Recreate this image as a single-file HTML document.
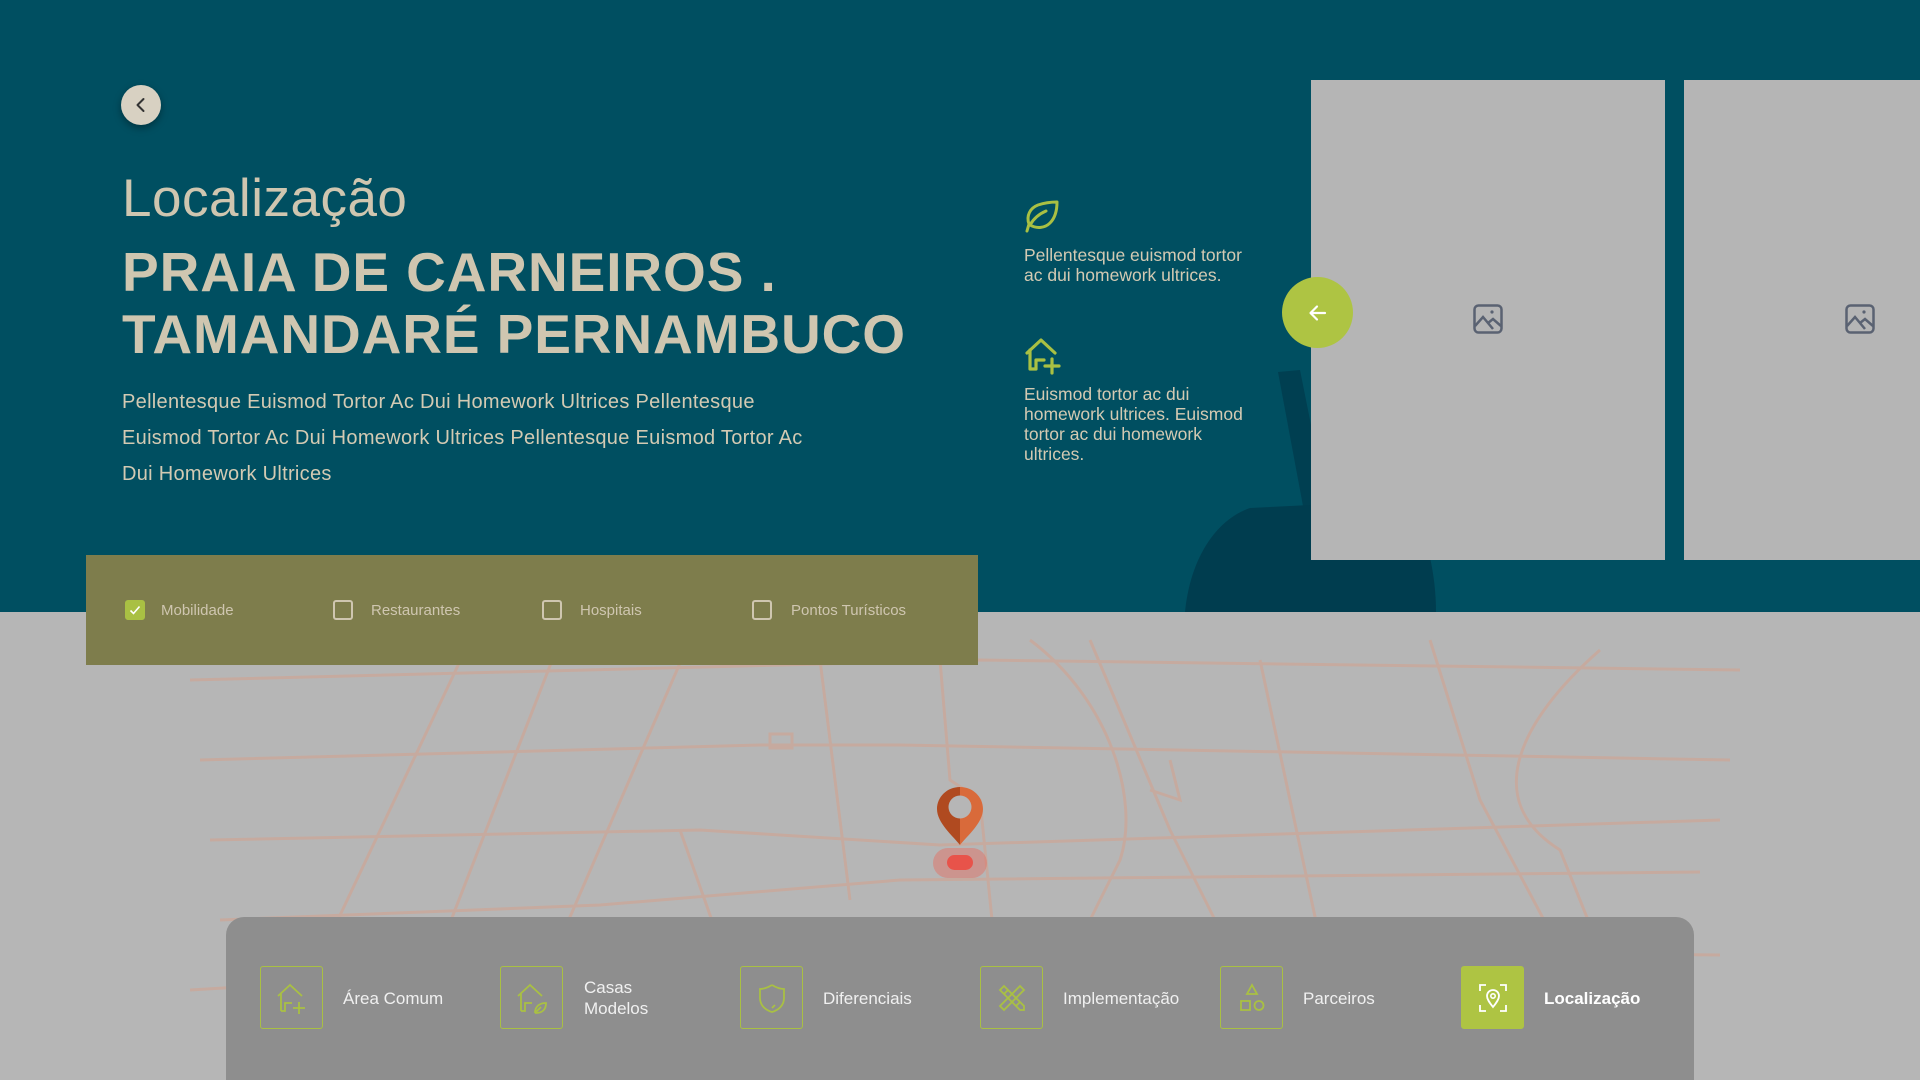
<!DOCTYPE html>
<html><head><meta charset="utf-8">
<style>
*{margin:0;padding:0;box-sizing:border-box}
html{width:1920px;height:1080px;overflow:hidden}
body{width:1920px;height:1080px;overflow:hidden;background:#b6b6b6;font-family:"Liberation Sans",sans-serif;position:relative}
.top{position:absolute;left:0;top:0;width:1920px;height:612px;background:#004f61;overflow:hidden}
.abs{position:absolute}
.back{left:121px;top:85px;width:40px;height:40px;border-radius:50%;background:#d8d1c2;box-shadow:0 3px 8px rgba(0,0,0,.35)}
.h1{left:122px;top:168px;font-size:53px;font-weight:300;color:#cfc6b0;letter-spacing:.5px}
.h2{left:122px;top:241px;font-size:55px;font-weight:700;line-height:62px;color:#cfc6b0;letter-spacing:.9px}
.p{left:122px;top:384px;font-size:20px;line-height:36px;color:#d3cab3;width:712px;letter-spacing:.3px}
.rt{left:1024px;font-size:17.5px;line-height:20px;color:#d3cab3;width:240px}
.card{background:#b5b5b5;top:80px;height:480px}
.filter{left:86px;top:555px;width:892px;height:110px;background:#7e7d4c}
.cb{position:absolute;top:600px;width:20px;height:20px;border:2px solid #cfc6b0;border-radius:3px}
.cl{position:absolute;top:601px;font-size:15px;line-height:20px;color:#cfc6b0}
.nav{left:226px;top:917px;width:1468px;height:163px;background:#8e8e8e;border-radius:18px 18px 0 0}
.ib{position:absolute;top:966px;width:63px;height:63px;border:1.5px solid #a9c043;border-radius:3px;display:flex;align-items:center;justify-content:center}
.nl{position:absolute;font-size:17px;color:#f0f0f0;line-height:21px}
</style></head><body>
<div class="top">
  <svg class="abs" style="left:0;top:0" width="1920" height="612">
    <path d="M1278 372 L1300 370 L1330 520 L1306 522 Z" fill="#003f51"/>
    <path d="M1185 612 C1190 560 1215 520 1250 508 L1410 500 C1425 530 1436 570 1436 612 Z" fill="#003d4f"/>
  </svg>
  <div class="abs back"><svg width="40" height="40"><path d="M22.5 14 L16.5 20 L22.5 26" fill="none" stroke="#333" stroke-width="2" stroke-linecap="round" stroke-linejoin="round"/></svg></div>
  <div class="abs h1">Localização</div>
  <div class="abs h2">PRAIA DE CARNEIROS .<br>TAMANDARÉ PERNAMBUCO</div>
  <div class="abs p">Pellentesque Euismod Tortor Ac Dui Homework Ultrices Pellentesque Euismod Tortor Ac Dui Homework Ultrices Pellentesque Euismod Tortor Ac Dui Homework Ultrices</div>
  <svg class="abs" style="left:1024px;top:198px" width="36" height="36" viewBox="0 0 36 36"><path d="M3 33 L5 26 C2 18 6 10 14 7 C20 5 28 4 33 4 C33 12 31 20 26 25 C21 30 13 31 6 27 M6 27 C10 20 15 16 22 13" fill="none" stroke="#a9c043" stroke-width="3" stroke-linecap="round" stroke-linejoin="round"/></svg>
  <div class="abs rt" style="top:245px">Pellentesque euismod tortor ac dui homework ultrices.</div>
  <svg class="abs" style="left:1024px;top:335px" width="40" height="40" viewBox="0 0 40 40"><path d="M3 18 L17 5 L31 18 M6 15 L6 34 L12 34 L12 25 L20 25 M28 24 L28 38 M21 31 L35 31" fill="none" stroke="#a9c043" stroke-width="3.2" stroke-linecap="round" stroke-linejoin="round"/></svg>
  <div class="abs rt" style="top:384px">Euismod tortor ac dui homework ultrices. Euismod tortor ac dui homework ultrices.</div>
  <div class="abs card" style="left:1311px;width:354px"></div>
  <div class="abs card" style="left:1684px;width:236px"></div>
  <svg class="abs" style="left:1473px;top:304px" width="30" height="30" viewBox="0 0 30 30"><rect x="1.5" y="1.5" width="27" height="27" rx="4" fill="none" stroke="#5a6272" stroke-width="2.5"/><path d="M2 22 L10 13 L20 25 M15 19 L20 15 L28 22" fill="none" stroke="#5a6272" stroke-width="2.5"/><circle cx="19" cy="8" r="1.6" fill="#5a6272"/></svg>
  <svg class="abs" style="left:1845px;top:304px" width="30" height="30" viewBox="0 0 30 30"><rect x="1.5" y="1.5" width="27" height="27" rx="4" fill="none" stroke="#5a6272" stroke-width="2.5"/><path d="M2 22 L10 13 L20 25 M15 19 L20 15 L28 22" fill="none" stroke="#5a6272" stroke-width="2.5"/><circle cx="19" cy="8" r="1.6" fill="#5a6272"/></svg>
  <div class="abs" style="left:1282px;top:277px;width:71px;height:71px;border-radius:50%;background:#aec443;display:flex;align-items:center;justify-content:center"><svg width="20" height="20" viewBox="0 0 20 20"><path d="M17 10 L3 10 M9 3.5 L2.5 10 L9 16.5" fill="none" stroke="#fff" stroke-width="2.2" stroke-linecap="round" stroke-linejoin="round"/></svg></div>
</div>
<svg class="abs" style="left:0;top:612px" width="1920" height="468" viewBox="0 612 1920 468" fill="none" stroke="#c9a99c" stroke-width="3" opacity=".85">
<path d="M190 680 L980 660 L1740 670"/>
<path d="M200 760 L760 745 L900 745 L1730 760"/>
<path d="M210 840 L700 830 L940 845 L1720 820"/>
<path d="M220 920 L600 905 L900 880 L1700 872"/>
<path d="M190 990 L700 960 L1200 950 L1720 955"/>
<path d="M300 1000 L470 640"/><path d="M420 1000 L560 640"/><path d="M560 940 L690 640"/>
<path d="M820 660 L850 900"/><path d="M680 830 L740 1000"/>
<path d="M940 660 L950 780 L980 800 L1000 1000"/>
<path d="M1030 640 C1110 700 1140 800 1120 860 L1050 1000"/>
<path d="M1090 640 L1170 830 L1230 950"/>
<path d="M1260 660 L1290 800 L1320 940"/>
<path d="M1430 640 L1480 800 L1560 950"/>
<path d="M1600 650 C1520 720 1480 800 1560 850 L1600 950"/>
<path d="M1150 790 L1180 800 L1170 760"/>
<rect x="770" y="734" width="22" height="14"/>
<path d="M1290 940 L1330 970"/>
</svg>
<div class="abs filter"></div>
<div class="cb" style="left:125px;background:#a9c043;border-color:#a9c043"><svg width="16" height="16" style="position:absolute;left:0;top:0"><path d="M3.5 8.5 L6.5 11.5 L12.5 4.5" fill="none" stroke="#fff" stroke-width="1.6"/></svg></div>
<div class="cl" style="left:161px">Mobilidade</div>
<div class="cb" style="left:333px"></div><div class="cl" style="left:371px">Restaurantes</div>
<div class="cb" style="left:542px"></div><div class="cl" style="left:580px">Hospitais</div>
<div class="cb" style="left:752px"></div><div class="cl" style="left:791px">Pontos Turísticos</div>
<svg class="abs" style="left:920px;top:780px" width="80" height="110" viewBox="0 0 80 110">
<rect x="13" y="68" width="54" height="30" rx="15" fill="#e66a5e" opacity=".45"/>
<rect x="27" y="75" width="26" height="15" rx="7.5" fill="#e8534a"/>
<path d="M40 7 C27 7 17 17 17 29 C17 43 33 56 40 65 Z" fill="#b04a20"/>
<path d="M40 7 C53 7 63 17 63 29 C63 43 47 56 40 65 Z" fill="#d96a3a"/>
<circle cx="40" cy="27" r="11.5" fill="#b6b6b6"/>
</svg>
<div class="abs nav"></div>
<div class="ib" style="left:260px"><svg width="34" height="34" viewBox="0 0 34 34"><path d="M3 15 L15 4 L27 15 M6 13 L6 30 M6 30 L10 30 L10 22 L17 22 M24 21 L24 33 M18 27 L30 27" fill="none" stroke="#a9c043" stroke-width="1.8"/></svg></div>
<div class="nl" style="left:343px;top:988px">Área Comum</div>
<div class="ib" style="left:500px"><svg width="34" height="34" viewBox="0 0 34 34"><path d="M3 15 L15 4 L27 15 M6 13 L6 30 M6 30 L10 30 L10 22 L17 22 M20 32 C20 25 25 22 31 22 C31 29 27 32 20 32 M21 31 L26 26" fill="none" stroke="#a9c043" stroke-width="1.8"/></svg></div>
<div class="nl" style="left:584px;top:977px">Casas<br>Modelos</div>
<div class="ib" style="left:740px"><svg width="34" height="34" viewBox="0 0 34 34"><path d="M17 4 C12 7 8 8 5 8 L5 17 C5 24 10 29 17 31 C24 29 29 24 29 17 L29 8 C26 8 22 7 17 4 M17 27 L20 24" fill="none" stroke="#a9c043" stroke-width="1.8"/></svg></div>
<div class="nl" style="left:823px;top:988px">Diferenciais</div>
<div class="ib" style="left:980px"><svg width="34" height="34" viewBox="0 0 34 34"><path d="M5 9 L9 5 L29 25 L29 29 L25 29 Z M25 5 L29 9 L9 29 L5 25 Z M9 13 L13 9 M21 25 L25 21" fill="none" stroke="#a9c043" stroke-width="1.8"/></svg></div>
<div class="nl" style="left:1063px;top:988px">Implementação</div>
<div class="ib" style="left:1220px"><svg width="34" height="34" viewBox="0 0 34 34"><path d="M17 4 L22 13 L12 13 Z" fill="none" stroke="#a9c043" stroke-width="1.8"/><rect x="6" y="20" width="9" height="9" fill="none" stroke="#a9c043" stroke-width="1.8"/><circle cx="24" cy="24.5" r="4.5" fill="none" stroke="#a9c043" stroke-width="1.8"/></svg></div>
<div class="nl" style="left:1303px;top:988px">Parceiros</div>
<div class="ib" style="left:1461px;background:#aec443;border-color:#aec443"><svg width="34" height="34" viewBox="0 0 34 34"><path d="M4 10 L4 4 L10 4 M24 4 L30 4 L30 10 M30 24 L30 30 L24 30 M10 30 L4 30 L4 24" fill="none" stroke="#fff" stroke-width="1.8"/><path d="M17 26 C13 21 11 18 11 15 C11 11.5 13.7 9 17 9 C20.3 9 23 11.5 23 15 C23 18 21 21 17 26 Z" fill="none" stroke="#fff" stroke-width="1.8"/><circle cx="17" cy="15" r="2.2" fill="none" stroke="#fff" stroke-width="1.6"/></svg></div>
<div class="nl" style="left:1544px;top:988px;font-weight:700;color:#fff">Localização</div>
</body></html>
